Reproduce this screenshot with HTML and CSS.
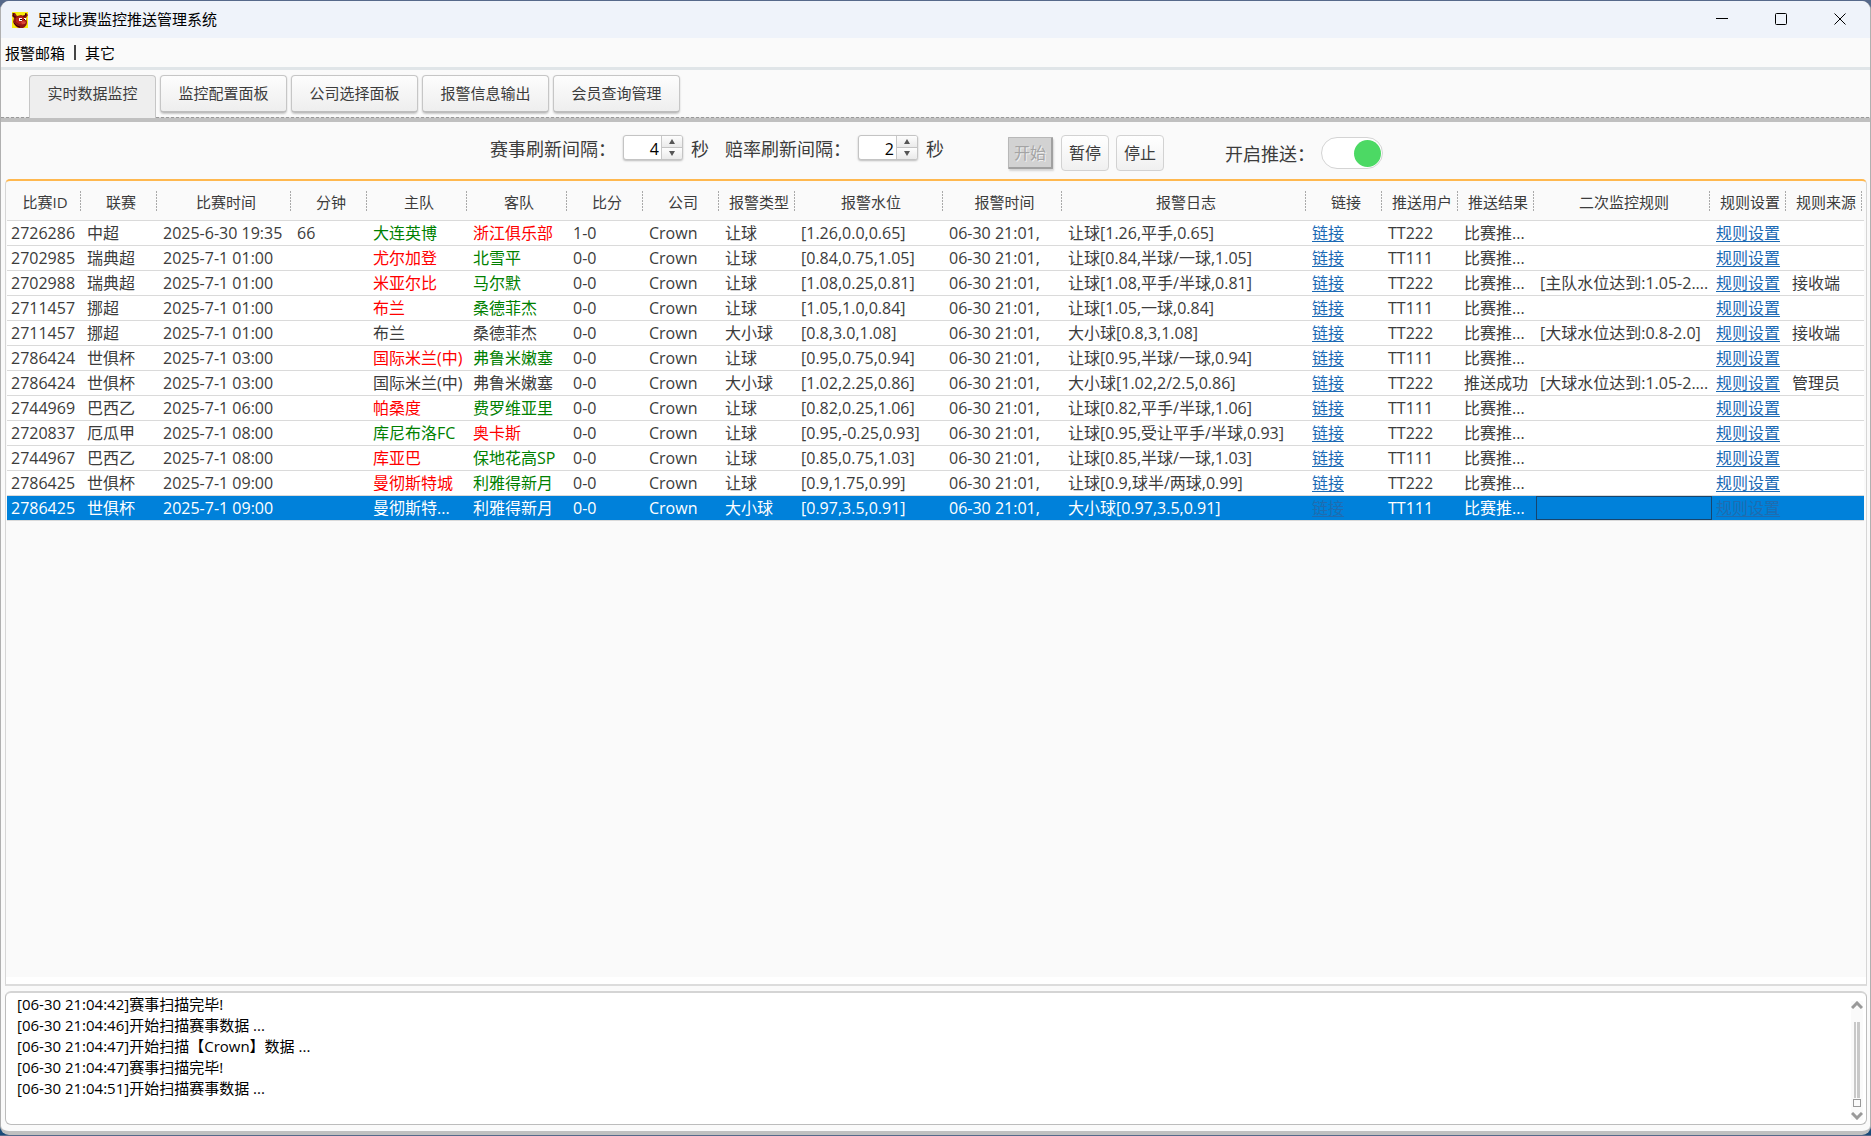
FILE: index.html
```html
<!DOCTYPE html>
<html lang="zh-CN">

<head>
    <meta charset="UTF-8">
    <meta name="viewport" content="width=device-width, initial-scale=1.0">
    <title>足球比赛监控推送管理系统</title>
    <link rel="stylesheet" href="styles.css">
</head>

<body>
    <div class="window">
        <header class="titlebar">
            <svg class="logo" viewBox="0 0 16 16" aria-hidden="true">
                <rect width="16" height="16" fill="#f8ee10" />
                <path d="M1 1 L0 4 L2 6 L1 10 Q3 15 7 16 L11 16 Q15 14 15 10 L14 6 L16 3 L14 1 L12 4 L9 3 L5 4 L3 1 Z" fill="#8e1712" />
                <path d="M4 6 L9 4 L13 6 L14 10 L11 13 L7 12 L4 10 Z" fill="#b8241a" />
                <path d="M1 1 L2 5 L4 5 M14 1 L13 4 L11 4 M2 11 L5 14 L8 15" fill="none" stroke="#3a0806" />
                <rect x="7" y="6" width="3" height="3" fill="#fff" />
                <rect x="8" y="7" width="2" height="1" fill="#200" />
                <rect x="12" y="6" width="2" height="2" fill="#fff" />
                <rect x="12" y="7" width="1" height="1" fill="#200" />
                <path d="M9 10 L11 9 L14 10 L13 12 L10 12 Z" fill="#d8483a" />
            </svg>
            <h1>足球比赛监控推送管理系统</h1>
            <div class="win-btns">
                <button type="button" aria-label="最小化"><svg viewBox="0 0 12 12"><path d="M0 5.5H12" /></svg></button>
                <button type="button" aria-label="最大化"><svg viewBox="0 0 12 12"><rect x="0.5" y="0.5" width="11" height="11" rx="1" /></svg></button>
                <button type="button" aria-label="关闭"><svg viewBox="0 0 12 12"><path d="M0.5 0.5L11.5 11.5M11.5 0.5L0.5 11.5" /></svg></button>
            </div>
        </header>

        <nav class="menu">
            <button type="button">报警邮箱</button>
            <span class="sep"></span>
            <button type="button">其它</button>
        </nav>

        <div class="tabs" role="tablist">
            <button type="button" role="tab" class="active" aria-selected="true">实时数据监控</button>
            <button type="button" role="tab">监控配置面板</button>
            <button type="button" role="tab">公司选择面板</button>
            <button type="button" role="tab">报警信息输出</button>
            <button type="button" role="tab">会员查询管理</button>
        </div>

        <div class="toolbar">
            <div class="intervals">
                <label for="match">赛事刷新间隔：</label>
                <div class="spin">
                    <input type="number" id="match" value="4">
                    <div class="arrows">
                        <button type="button" class="up" aria-label="增加"></button>
                        <button type="button" class="down" aria-label="减少"></button>
                    </div>
                </div>
                <span class="unit">秒</span>
                <label for="odds">赔率刷新间隔：</label>
                <div class="spin">
                    <input type="number" id="odds" value="2">
                    <div class="arrows">
                        <button type="button" class="up" aria-label="增加"></button>
                        <button type="button" class="down" aria-label="减少"></button>
                    </div>
                </div>
                <span class="unit">秒</span>
            </div>
            <div class="actions">
                <button type="button" disabled>开始</button>
                <button type="button">暂停</button>
                <button type="button">停止</button>
            </div>
            <div class="push">
                <label for="push">开启推送：</label>
                <input type="checkbox" id="push" class="switch" checked>
            </div>
        </div>

        <main class="grid">
            <table>
                <colgroup>
                    <col class="c-s"><col class="c-s"><col class="c-date"><col class="c-s"><col class="c-team"><col class="c-team">
                    <col class="c-s"><col class="c-s"><col class="c-s"><col class="c-water"><col class="c-time"><col class="c-log">
                    <col class="c-s"><col class="c-s"><col class="c-s"><col class="c-rule"><col class="c-s"><col class="c-s">
                </colgroup>
                <thead>
                    <tr>
                        <th>比赛ID</th>
                        <th>联赛</th>
                        <th>比赛时间</th>
                        <th>分钟</th>
                        <th>主队</th>
                        <th>客队</th>
                        <th>比分</th>
                        <th>公司</th>
                        <th>报警类型</th>
                        <th>报警水位</th>
                        <th>报警时间</th>
                        <th>报警日志</th>
                        <th>链接</th>
                        <th>推送用户</th>
                        <th>推送结果</th>
                        <th>二次监控规则</th>
                        <th>规则设置</th>
                        <th>规则来源</th>
                    </tr>
                </thead>
                <tbody id="rows"></tbody>
            </table>
        </main>

        <section class="log">
            <div class="lines">
                <p>[06-30 21:04:42]赛事扫描完毕!</p>
                <p>[06-30 21:04:46]开始扫描赛事数据 ...</p>
                <p>[06-30 21:04:47]开始扫描【Crown】数据 ...</p>
                <p>[06-30 21:04:47]赛事扫描完毕!</p>
                <p>[06-30 21:04:51]开始扫描赛事数据 ...</p>
            </div>
            <div class="scroll">
                <button type="button" aria-label="向上滚动"><svg viewBox="0 0 12 8"><path d="M1 7L6 2L11 7" /></svg></button>
                <div class="track"></div>
                <div class="thumb"></div>
                <button type="button" aria-label="向下滚动"><svg viewBox="0 0 12 8"><path d="M1 1L6 6L11 1" /></svg></button>
            </div>
        </section>
    </div>

    <script>
        // id, 联赛, 时间, 分钟, 主队, 主队颜色, 客队, 客队颜色, 比分, 类型, 水位, 日志, 用户, 结果, 规则, 来源
        const matches = [
            ['2726286', '中超', '2025-6-30 19:35', '66', '大连英博', 'green', '浙江俱乐部', 'red', '1-0', '让球', '[1.26,0.0,0.65]', '让球[1.26,平手,0.65]', 'TT222', '比赛推...', '', ''],
            ['2702985', '瑞典超', '2025-7-1 01:00', '', '尤尔加登', 'red', '北雪平', 'green', '0-0', '让球', '[0.84,0.75,1.05]', '让球[0.84,半球/一球,1.05]', 'TT111', '比赛推...', '', ''],
            ['2702988', '瑞典超', '2025-7-1 01:00', '', '米亚尔比', 'red', '马尔默', 'green', '0-0', '让球', '[1.08,0.25,0.81]', '让球[1.08,平手/半球,0.81]', 'TT222', '比赛推...', '[主队水位达到:1.05-2....', '接收端'],
            ['2711457', '挪超', '2025-7-1 01:00', '', '布兰', 'red', '桑德菲杰', 'green', '0-0', '让球', '[1.05,1.0,0.84]', '让球[1.05,一球,0.84]', 'TT111', '比赛推...', '', ''],
            ['2711457', '挪超', '2025-7-1 01:00', '', '布兰', '', '桑德菲杰', '', '0-0', '大小球', '[0.8,3.0,1.08]', '大小球[0.8,3,1.08]', 'TT222', '比赛推...', '[大球水位达到:0.8-2.0]', '接收端'],
            ['2786424', '世俱杯', '2025-7-1 03:00', '', '国际米兰(中)', 'red', '弗鲁米嫩塞', 'green', '0-0', '让球', '[0.95,0.75,0.94]', '让球[0.95,半球/一球,0.94]', 'TT111', '比赛推...', '', ''],
            ['2786424', '世俱杯', '2025-7-1 03:00', '', '国际米兰(中)', '', '弗鲁米嫩塞', '', '0-0', '大小球', '[1.02,2.25,0.86]', '大小球[1.02,2/2.5,0.86]', 'TT222', '推送成功', '[大球水位达到:1.05-2....', '管理员'],
            ['2744969', '巴西乙', '2025-7-1 06:00', '', '帕桑度', 'red', '费罗维亚里', 'green', '0-0', '让球', '[0.82,0.25,1.06]', '让球[0.82,平手/半球,1.06]', 'TT111', '比赛推...', '', ''],
            ['2720837', '厄瓜甲', '2025-7-1 08:00', '', '库尼布洛FC', 'green', '奥卡斯', 'red', '0-0', '让球', '[0.95,-0.25,0.93]', '让球[0.95,受让平手/半球,0.93]', 'TT222', '比赛推...', '', ''],
            ['2744967', '巴西乙', '2025-7-1 08:00', '', '库亚巴', 'red', '保地花高SP', 'green', '0-0', '让球', '[0.85,0.75,1.03]', '让球[0.85,半球/一球,1.03]', 'TT111', '比赛推...', '', ''],
            ['2786425', '世俱杯', '2025-7-1 09:00', '', '曼彻斯特城', 'red', '利雅得新月', 'green', '0-0', '让球', '[0.9,1.75,0.99]', '让球[0.9,球半/两球,0.99]', 'TT222', '比赛推...', '', ''],
            ['2786425', '世俱杯', '2025-7-1 09:00', '', '曼彻斯特...', '', '利雅得新月', '', '0-0', '大小球', '[0.97,3.5,0.91]', '大小球[0.97,3.5,0.91]', 'TT111', '比赛推...', '', '']
        ];

        function cell(text, cls) {
            return '<td class="' + (cls || '') + '">' + text + '</td>';
        }

        document.getElementById('rows').innerHTML = matches.map(function (m, i) {
            const selected = i === matches.length - 1;
            return '<tr class="' + (selected ? 'selected' : '') + '">' +
                cell(m[0]) + cell(m[1]) + cell(m[2]) + cell(m[3]) +
                cell(m[4], m[5]) + cell(m[6], m[7]) + cell(m[8]) + cell('Crown') +
                cell(m[9]) + cell(m[10]) + cell('06-30 21:01,') + cell(m[11]) +
                cell('<a href="#">链接</a>') + cell(m[12]) + cell(m[13]) +
                cell(m[14], selected ? 'current' : '') +
                cell('<a href="#">规则设置</a>') + cell(m[15]) + '</tr>';
        }).join('');
    </script>
</body>

</html>
```

FILE: styles.css
```css
* {
    box-sizing: border-box;
}

body {
    margin: 0;
    background: linear-gradient(#56698a 50%, #1a4a78 50%);
    font-family: "Open Sans", "Noto Sans CJK SC", sans-serif;
    font-size: 15px;
    color: #3c3c3c;
}

button,
input {
    font: inherit;
    color: inherit;
    margin: 0;
    padding: 0;
    border: none;
    background: none;
}

.window {
    display: flex;
    flex-direction: column;
    height: calc(100vh - 2px);
    margin-top: 1px;
    border: 1px solid #b0b0b0;
    border-top: none;
    border-bottom: 4px solid #c0c0c0;
    border-radius: 9px;
    background: #fafafa;
    overflow: hidden;
}

/* title bar */
.titlebar {
    display: flex;
    align-items: center;
    height: 37px;
    flex: none;
    padding: 0 1px 0 11px;
    background: #eff3fa;
    color: #000;
}

.logo {
    width: 16px;
    height: 16px;
    margin-right: 9px;
}

.titlebar h1 {
    flex: 1;
    margin: 0;
    padding-bottom: 2px;
    font-size: 15px;
    font-weight: normal;
}

.win-btns {
    display: flex;
    height: 36px;
    align-self: flex-start;
}

.win-btns button {
    display: flex;
    align-items: center;
    justify-content: center;
    width: 59px;
}

.win-btns svg {
    width: 12px;
    height: 12px;
    fill: none;
    stroke: #000;
}

/* menu */
.menu {
    display: flex;
    align-items: center;
    gap: 9px;
    height: 32px;
    flex: none;
    padding-left: 4px;
    border-bottom: 3px solid #e0e5e8;
    color: #000;
}

.menu .sep {
    width: 2px;
    height: 15px;
    background: #444;
}

/* tabs */
.tabs {
    display: flex;
    align-items: flex-start;
    gap: 4px;
    height: 52px;
    flex: none;
    padding: 5px 0 0 28px;
    border-bottom: 4px solid #c0c0c0;
    background: repeating-linear-gradient(90deg, #999 0 3px, #ddd 3px 5px) bottom / 100% 1px no-repeat;
}

.tabs button {
    width: 127px;
    height: 38px;
    padding-bottom: 2px;
    border: 1px solid #c6c6c6;
    border-bottom: 2px solid #bdbdbd;
    border-radius: 4px;
    background: linear-gradient(#fdfdfd, #eee);
    box-shadow: 0 1px 2px rgba(0, 0, 0, 0.2);
}

.tabs .active {
    height: 43px;
    padding-bottom: 9px;
    border-bottom: none;
    border-radius: 4px 4px 0 0;
    background: #eee;
    box-shadow: none;
}

/* toolbar */
.toolbar {
    display: flex;
    justify-content: center;
    height: 57px;
    flex: none;
    padding: 13px 0 0 2px;
    font-size: 18px;
    line-height: 28px;
}

.intervals {
    display: flex;
    align-items: flex-start;
}

.intervals label {
    width: 133px;
}

.unit {
    width: 34px;
    margin-left: 8px;
}

.unit:last-child {
    width: 18px;
}

.spin {
    display: flex;
    width: 60px;
    height: 25px;
    border: 1px solid #c4c4c4;
    border-radius: 3px;
    background: #fff;
    box-shadow: 0 1px 2px rgba(0, 0, 0, 0.25);
    overflow: hidden;
}

.spin input {
    flex: 1;
    min-width: 0;
    padding: 2px 2px 0 0;
    font-size: 16px;
    text-align: right;
    color: #000;
    appearance: textfield;
    outline: none;
}

.spin input::-webkit-inner-spin-button {
    appearance: none;
}

.arrows {
    display: flex;
    flex-direction: column;
    width: 21px;
    border-left: 1px solid #c8c8c8;
}

.arrows button {
    display: flex;
    flex: 1;
    align-items: center;
    justify-content: center;
    background: linear-gradient(#fdfdfd, #eaeaea);
}

.arrows .down {
    border-top: 1px solid #c4c4c4;
}

.arrows button::before {
    content: "";
    border: 3px solid transparent;
}

.arrows .up::before {
    border-top: none;
    border-bottom: 5px solid #555;
}

.arrows .down::before {
    border-bottom: none;
    border-top: 5px solid #555;
}

.actions {
    display: flex;
    gap: 7px;
    margin-left: 64px;
    font-size: 16px;
    line-height: 24px;
}

.actions button {
    width: 48px;
    height: 36px;
    border: 1px solid #d2d2d2;
    border-radius: 4px;
    background: linear-gradient(#fff, #f0f0f0);
}

.actions button:disabled {
    width: 45px;
    height: 32px;
    margin: 2px 1px 0 0;
    border: 1px solid #b8b8b8;
    border-bottom: 2px solid #a0a0a0;
    border-right: 2px solid #a0a0a0;
    border-radius: 1px;
    background: #d2d2d2;
    color: #a4a4a4;
    text-shadow: 1px 1px #f0f0f0;
    box-shadow: 1px 2px 2px rgba(0, 0, 0, 0.15);
}

.push {
    display: flex;
    align-items: center;
    height: 36px;
    margin-left: 61px;
}

.push label {
    width: 96px;
    padding-top: 2px;
}

.switch {
    appearance: none;
    display: flex;
    align-items: center;
    justify-content: flex-end;
    width: 62px;
    height: 32px;
    padding-right: 1px;
    border: 1px solid #d4d4d4;
    border-radius: 16px;
    background: #fff;
}

.switch::before {
    content: "";
    width: 27px;
    height: 27px;
    border-radius: 50%;
    background: #4cd964;
}

/* data grid */
.grid {
    flex: 1;
    min-height: 0;
    margin: 0 3px 0 4px;
    padding: 0 2px 0 1px;
    border: 1px solid #d6d6d6;
    border-top: 2px solid #ffb84f;
    border-bottom: 2px solid #dcdcdc;
    border-radius: 5px 5px 0 0;
    box-shadow: inset 0 -7px #fff;
    overflow: hidden;
}

table {
    width: 100%;
    table-layout: fixed;
    border-collapse: separate;
    border-spacing: 0;
}

.c-s {
    width: 76px;
}

.c-date {
    width: 134px;
}

.c-team {
    width: 100px;
}

.c-water {
    width: 148px;
}

.c-time {
    width: 119px;
}

.c-rule {
    width: 176px;
}

th {
    height: 40px;
    padding: 2px 0 0;
    border-bottom: 1px solid #dadada;
    font-size: 15px;
    font-weight: normal;
    white-space: nowrap;
    background: repeating-linear-gradient(#aaa 0 2px, transparent 2px 3px) calc(100% - 2px) 10px / 1px 20px no-repeat;
}

td {
    height: 25px;
    padding: 0 0 0 4px;
    border-bottom: 1px solid #dadada;
    background: #fff;
    font-size: 16px;
    line-height: 24px;
    white-space: nowrap;
    overflow: hidden;
    text-overflow: ellipsis;
}

td a {
    color: #1a69b4;
    text-underline-offset: 2px;
}

.red {
    color: #ff0000;
}

.green {
    color: #008000;
}

.selected td {
    background: #0081da;
    color: #fff;
}

.selected a {
    color: #1f6cb0;
}

.selected .current {
    box-shadow: inset 0 0 0 1px #17456e;
}

/* log output */
.log {
    display: flex;
    flex: none;
    margin: 5px 3px 6px 4px;
    border: 1px solid #bcbcbc;
    border-top: 2px solid #d4d4d4;
    border-radius: 6px;
    background: #fff;
    color: #000;
}

.lines {
    flex: 1;
    padding: 1px 0 25px 11px;
}

.lines p {
    margin: 0;
    line-height: 21px;
}

.scroll {
    display: flex;
    flex-direction: column;
    align-items: center;
    width: 12px;
    margin: 8px 3px 4px 0;
    background: #fafafa;
}

.scroll button {
    display: flex;
}

.scroll svg {
    width: 12px;
    height: 8px;
    fill: none;
    stroke: #999;
    stroke-width: 3;
}

.track {
    flex: 1;
    width: 6px;
    margin-top: 13px;
    border: solid #c8c8c8;
    border-width: 0 3px 0 2px;
}

.thumb {
    width: 8px;
    height: 8px;
    margin: 1px 0 5px;
    border: 1px solid #999;
}
```
